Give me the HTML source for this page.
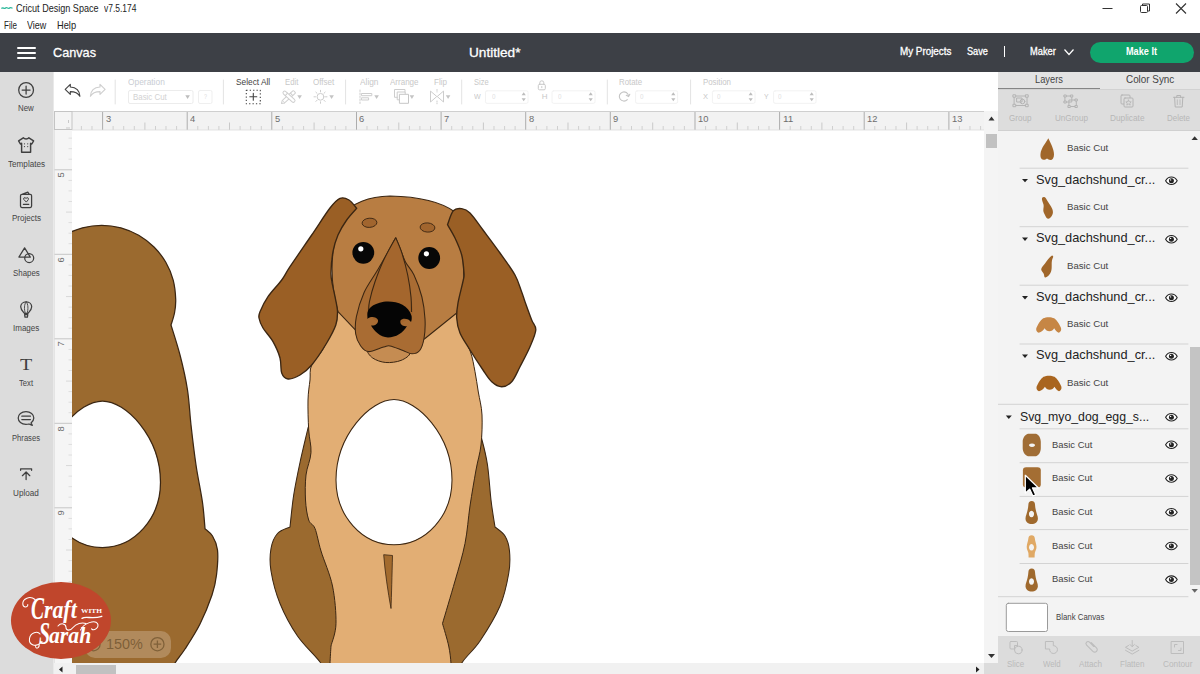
<!DOCTYPE html>
<html><head><meta charset="utf-8"><title>Cricut Design Space</title>
<style>
*{box-sizing:border-box;margin:0;padding:0}
html,body{width:1200px;height:674px;overflow:hidden;background:#fff;font-family:"Liberation Sans",sans-serif;color:#333}
.abs{position:absolute}
.t{position:absolute;white-space:nowrap;line-height:1;transform-origin:0 50%}
</style></head><body>
<div class="abs" style="left:0;top:0;width:1200px;height:33px;background:#fff"></div>
<svg class="abs" style="left:1px;top:4px" width="12" height="8" viewBox="0 0 12 8"><path d="M0.5,4.5 C2,2.5 3,5.5 4.5,4 C6,2.5 7,5.5 8.5,4 C9.5,3 10.5,4.5 11.5,3.8" fill="none" stroke="#2bb89a" stroke-width="1.3"/></svg>
<div class="t" style="left:15.50px;top:3.55px;font-size:10.3px;color:#222;font-weight:normal;;transform:scaleX(0.879)">Cricut Design Space</div>
<div class="t" style="left:103.50px;top:3.55px;font-size:10.3px;color:#222;font-weight:normal;;transform:scaleX(0.822)">v7.5.174</div>
<div class="t" style="left:3.80px;top:20.55px;font-size:10.3px;color:#222;font-weight:normal;;transform:scaleX(0.777)">File</div>
<div class="t" style="left:27.00px;top:20.55px;font-size:10.3px;color:#222;font-weight:normal;;transform:scaleX(0.872)">View</div>
<div class="t" style="left:56.70px;top:20.55px;font-size:10.3px;color:#222;font-weight:normal;;transform:scaleX(0.901)">Help</div>
<svg class="abs" style="left:1095px;top:0" width="105" height="18" viewBox="1095 0 105 18"><path d="M1102.5,8.5h10" stroke="#333" stroke-width="1" fill="none"/><rect x="1140.5" y="5.500" width="7" height="7" rx="1" fill="none" stroke="#333" stroke-width="1"/><path d="M1142.5,5.500v-1.500h7v7h-1.500" fill="none" stroke="#333" stroke-width="1"/><path d="M1176,3.500l10,10M1186,3.500l-10,10" stroke="#333" stroke-width="1.1" fill="none"/></svg>
<div class="abs" style="left:0;top:33px;width:1200px;height:39px;background:#3d4046"></div>
<div class="abs" style="left:17px;top:47px;width:18.5px;height:2px;background:#fff;border-radius:1px;box-shadow:0 5px 0 #fff,0 10px 0 #fff"></div>
<div class="t" style="left:53.30px;top:45.55px;font-size:13.5px;color:#fff;font-weight:normal;-webkit-text-stroke:0.3px #fff;transform:scaleX(0.939)">Canvas</div>
<div class="t" style="left:468.50px;top:45.55px;font-size:13.5px;color:#fff;font-weight:normal;-webkit-text-stroke:0.3px #fff;transform:scaleX(1.009)">Untitled*</div>
<div class="t" style="left:899.80px;top:47.40px;font-size:10px;color:#fff;font-weight:normal;-webkit-text-stroke:0.3px #fff;transform:scaleX(0.984)">My Projects</div>
<div class="t" style="left:966.70px;top:47.40px;font-size:10px;color:#fff;font-weight:normal;-webkit-text-stroke:0.3px #fff;transform:scaleX(0.917)">Save</div>
<div class="abs" style="left:1004px;top:46px;width:1px;height:11px;background:#fff"></div>
<div class="t" style="left:1029.50px;top:47.40px;font-size:10px;color:#fff;font-weight:normal;-webkit-text-stroke:0.3px #fff;transform:scaleX(0.928)">Maker</div>
<svg class="abs" style="left:1063px;top:47px" width="12" height="10" viewBox="0 0 12 10"><path d="M1.500,2.500l4.500,5l4.500,-5" fill="none" stroke="#fff" stroke-width="1.2"/></svg>
<div class="abs" style="left:1090px;top:42.300px;width:104.300px;height:20.900px;border-radius:10.500px;background:#10a56d"></div>
<div class="t" style="left:1126.40px;top:47.40px;font-size:10px;color:#fff;font-weight:bold;;transform:scaleX(0.914)">Make It</div>
<div class="abs" style="left:0;top:72px;width:53px;height:602px;background:#dcdcdc"></div>
<div class="abs" style="left:53px;top:72px;width:1px;height:602px;background:#e9e9e9"></div>
<svg class="abs" style="left:0;top:72px" width="53" height="602" viewBox="0 72 53 602" fill="none" stroke="#3f3f3f" stroke-width="1.25" stroke-linecap="round" stroke-linejoin="round"><circle cx="26.1" cy="90" r="7.4"/><path d="M26.1,86v8M22.100,90h8"/><path stroke-width="1.45" d="M23.300,137.800 C24.500,139.300 27.700,139.300 28.900,137.800 L33.600,140.800 L31.800,144 L30.600,143.300 L30.600,152.200 L21.600,152.200 L21.600,143.300 L20.400,144 L18.600,140.800 Z"/><g fill="#3f3f3f" stroke="none"><circle cx="24.500" cy="143.800" r="0.6"/><circle cx="27.700" cy="143.800" r="0.6"/><circle cx="24.500" cy="146.600" r="0.6"/><circle cx="27.700" cy="146.600" r="0.6"/></g><path d="M22,194.300 L27.800,192.100 L29.300,194.300 L30.200,194.300 Q31.600,194.300 31.600,195.700 L31.600,206.100 Q31.600,207.500 30.200,207.500 L21.900,207.500 Q20.500,207.500 20.500,206.100 L20.500,195.700 Q20.500,194.300 22,194.300 L29.300,194.300"/><path d="M26.050,201.800 L23.700,199.300 Q23.300,197.600 24.900,197.600 Q25.800,197.700 26.050,198.500 Q26.300,197.700 27.200,197.600 Q28.800,197.600 28.400,199.300 Z" stroke-width="1"/><path d="M23.400,204.300h5.400"/><path d="M24.600,247.800 L30.300,257.100 L18.900,257.100 Z"/><circle cx="29.200" cy="258" r="4.500"/><path d="M26.200,301.800 C29.600,301.800 31.700,304.200 31.700,306.800 C31.700,309.600 29.700,311.300 28,313.300 L24.400,313.300 C22.700,311.300 20.700,309.600 20.700,306.800 C20.700,304.200 22.800,301.800 26.200,301.800 Z"/><path d="M26.200,301.800 C24,304 24,309.500 25.300,313.300 M26.200,301.800 C28.400,304 28.400,309.500 27.100,313.300" stroke-width="0.9"/><path d="M24.600,314.600 h3.200 l-0.4,2.500 h-2.400 Z"/><path d="M26,411.600 C30.500,411.600 33.800,414.400 33.800,418 C33.800,420 32.700,421.700 31,422.900 L32.300,425.400 L29,424 C28,424.300 27,424.400 26,424.400 C21.500,424.400 18.200,421.600 18.200,418 C18.200,414.400 21.500,411.600 26,411.600 Z"/><path d="M21.800,416.200h8.600M21.800,419.600h8.600"/><path d="M20.600,470.300 v-1.500 h11 v1.500 M26.100,479.600 v-7.400 M22.400,475.700 l3.700,-3.700 l3.700,3.700"/></svg><div class="t" style="left:18.20px;top:104.25px;font-size:8.5px;color:#444;font-weight:normal;;transform:scaleX(0.929)">New</div><div class="t" style="left:7.90px;top:159.55px;font-size:8.5px;color:#444;font-weight:normal;;transform:scaleX(0.957)">Templates</div><div class="t" style="left:11.70px;top:214.15px;font-size:8.5px;color:#444;font-weight:normal;;transform:scaleX(0.947)">Projects</div><div class="t" style="left:12.90px;top:269.15px;font-size:8.5px;color:#444;font-weight:normal;;transform:scaleX(0.926)">Shapes</div><div class="t" style="left:12.90px;top:323.75px;font-size:8.5px;color:#444;font-weight:normal;;transform:scaleX(0.943)">Images</div><div class="t" style="left:20px;top:356px;font-family:'Liberation Serif',serif;font-size:17.500px;color:#3f3f3f;transform:scaleX(1.14)">T</div><div class="t" style="left:19.20px;top:379.15px;font-size:8.5px;color:#444;font-weight:normal;;transform:scaleX(0.904)">Text</div><div class="t" style="left:12.00px;top:433.55px;font-size:8.5px;color:#444;font-weight:normal;;transform:scaleX(0.898)">Phrases</div><div class="t" style="left:13.20px;top:488.55px;font-size:8.5px;color:#444;font-weight:normal;;transform:scaleX(0.958)">Upload</div>
<div class="abs" style="left:54px;top:72px;width:944px;height:39px;background:#fff"></div>
<svg class="abs" style="left:54px;top:72px" width="944" height="39" viewBox="54 72 944 39" fill="none" stroke-linecap="round" stroke-linejoin="round"><path d="M70.300,84.300 L65.200,89.300 L70.300,94.300 L70.300,91.600 C75,91.600 78,93 79.900,96.300 C79.600,90.600 76,87.300 70.300,87 Z" stroke="#444" stroke-width="1.15"/><g transform="translate(170.300,0) scale(-1,1)"><path d="M70.300,84.300 L65.200,89.300 L70.300,94.300 L70.300,91.600 C75,91.600 78,93 79.900,96.300 C79.600,90.600 76,87.300 70.300,87 Z" stroke="#cfcfcf" stroke-width="1.15"/></g><path d="M115.2,80V104" stroke="#e3e3e3" stroke-width="1"/><path d="M223.4,80V104" stroke="#e3e3e3" stroke-width="1"/><path d="M345.6,80V104" stroke="#e3e3e3" stroke-width="1"/><path d="M461.7,80V104" stroke="#e3e3e3" stroke-width="1"/><path d="M607.3,80V104" stroke="#e3e3e3" stroke-width="1"/><path d="M690.6,80V104" stroke="#e3e3e3" stroke-width="1"/><rect x="128.500" y="90.500" width="64.500" height="13" rx="1.500" stroke="#ececec"/><path d="M185.300,95.300h4.600l-2.300,3.600z" fill="#bdbdbd"/><rect x="198.500" y="90.500" width="13.500" height="13" rx="1.500" stroke="#efefef"/><rect x="246.300" y="90.300" width="14" height="13.500" stroke="#444" stroke-width="1.1" stroke-dasharray="1.300 2.100" stroke-linecap="butt"/><path d="M253.300,93.300v7M249.800,96.800h7" stroke="#444" stroke-width="1.1"/><g stroke="#cfcfcf" stroke-width="1" fill="#fff"><g transform="rotate(-42 289 96.700)"><rect x="281.500" y="95" width="15" height="3.400" rx="0.800"/><path d="M281.500,95l-2.600,1.700l2.600,1.700M292.500,95v3.400"/></g><g transform="rotate(42 289 96.700)"><rect x="281.500" y="95" width="15" height="3.400" rx="1.700"/><path d="M285.500,95v3.400"/></g></g><path d="M297.300,95.300h4.600l-2.300,3.600z" fill="#c4c4c4"/><g stroke="#cdcdcd" stroke-width="1"><circle cx="320.500" cy="96.800" r="3.400"/><path d="M320.500,90.300v1.500M320.500,101.800v1.500M314,96.800h1.500M325.500,96.800h1.500M315.900,92.200l1.100,1.100M324,100.300l1.100,1.100M315.900,101.400l1.100,-1.100M324,93.300l1.100,-1.100" stroke-dasharray="none"/></g><path d="M329.300,95.300h4.600l-2.300,3.600z" fill="#c4c4c4"/><g stroke="#cdcdcd" stroke-width="1"><path d="M360,90v13.500" stroke-dasharray="1.500 1.500"/><rect x="361.800" y="93.500" width="10" height="2.200"/><rect x="361.800" y="97.800" width="6.800" height="2.200"/></g><path d="M374.300,95.300h4.600l-2.300,3.600z" fill="#c4c4c4"/><g stroke="#cdcdcd" stroke-width="1"><path d="M397.300,97.300h-2.800v-7.800h10.500v2.500"/><path d="M399.800,99.800h-2.600v-7.800h8v2"/><rect x="399.800" y="94.300" width="8.700" height="9" fill="#fff" stroke="#c6c6c6"/></g><path d="M409.600,95.300h4.600l-2.300,3.600z" fill="#c4c4c4"/><g stroke="#cdcdcd" stroke-width="1"><path d="M430.500,91.500v10.500l6,-5.250z"/><path d="M443.500,91.500v10.500l-6,-5.250z"/><path d="M437,89.500v2.500M437,101v2.800" stroke-dasharray="1 1.200"/></g><path d="M445.800,95.300h4.600l-2.300,3.600z" fill="#c4c4c4"/><rect x="485.5" y="90.800" width="42.5" height="12.500" rx="1.500" stroke="#f2f2f2"/><path d="M521.6,95.300l2.100,-3l2.100,3z M521.6,98.300l2.100,3l2.100,-3z" fill="#bdbdbd"/><rect x="552" y="90.800" width="43" height="12.500" rx="1.500" stroke="#f2f2f2"/><path d="M588.6,95.300l2.100,-3l2.100,3z M588.6,98.300l2.100,3l2.100,-3z" fill="#bdbdbd"/><rect x="635.6" y="90.800" width="42.0" height="12.500" rx="1.500" stroke="#f2f2f2"/><path d="M671.2,95.300l2.100,-3l2.100,3z M671.2,98.300l2.100,3l2.100,-3z" fill="#bdbdbd"/><rect x="712.4" y="90.800" width="42.60000000000002" height="12.500" rx="1.500" stroke="#f2f2f2"/><path d="M748.6,95.300l2.100,-3l2.100,3z M748.6,98.300l2.100,3l2.100,-3z" fill="#bdbdbd"/><rect x="773.6" y="90.800" width="42.39999999999998" height="12.500" rx="1.500" stroke="#f2f2f2"/><path d="M809.6,95.300l2.100,-3l2.100,3z M809.6,98.300l2.100,3l2.100,-3z" fill="#bdbdbd"/><g stroke="#c9c9c9" stroke-width="1"><rect x="538.300" y="84.300" width="7" height="5.500" rx="1.200"/><path d="M539.800,84.300v-1.500a2,2 0 0 1 4,0v1.500"/><path d="M541.800,86.500v1.200"/></g><g stroke="#c4c4c4" stroke-width="1.1"><path d="M627.300,99.600a4.600,4.600 0 1 1 1.200,-3.600"/><path d="M626.300,95.300l2.300,1.300l1.200,-2.400"/></g></svg><div class="t" style="left:128.00px;top:78.10px;font-size:9px;color:#c9cdd3;font-weight:normal;;transform:scaleX(0.931)">Operation</div><div class="t" style="left:133.00px;top:92.50px;font-size:9px;color:#d2d2d2;font-weight:normal;;transform:scaleX(0.878)">Basic Cut</div><div class="t" style="left:203.60px;top:93.25px;font-size:7.5px;color:#dcdcdc;font-weight:normal;;transform:scaleX(0.719)">?</div><div class="t" style="left:236.00px;top:77.90px;font-size:9px;color:#444;font-weight:normal;;transform:scaleX(0.924)">Select All</div><div class="t" style="left:284.80px;top:77.90px;font-size:9px;color:#c8c8c8;font-weight:normal;;transform:scaleX(0.864)">Edit</div><div class="t" style="left:313.20px;top:77.90px;font-size:9px;color:#c8c8c8;font-weight:normal;;transform:scaleX(0.893)">Offset</div><div class="t" style="left:359.50px;top:77.90px;font-size:9px;color:#c8c8c8;font-weight:normal;;transform:scaleX(0.924)">Align</div><div class="t" style="left:390.00px;top:77.90px;font-size:9px;color:#c8c8c8;font-weight:normal;;transform:scaleX(0.890)">Arrange</div><div class="t" style="left:433.50px;top:77.90px;font-size:9px;color:#c8c8c8;font-weight:normal;;transform:scaleX(0.896)">Flip</div><div class="t" style="left:473.70px;top:77.90px;font-size:9px;color:#c8c8c8;font-weight:normal;;transform:scaleX(0.834)">Size</div><div class="t" style="left:474.30px;top:92.90px;font-size:8px;color:#c8c8c8;font-weight:normal;;transform:scaleX(0.886)">W</div><div class="t" style="left:491.50px;top:92.90px;font-size:8px;color:#e2e2e2;font-weight:normal;;transform:scaleX(0.786)">0</div><div class="t" style="left:541.70px;top:92.90px;font-size:8px;color:#c8c8c8;font-weight:normal;">H</div><div class="t" style="left:557.50px;top:92.90px;font-size:8px;color:#e2e2e2;font-weight:normal;;transform:scaleX(0.786)">0</div><div class="t" style="left:619.40px;top:77.90px;font-size:9px;color:#c8c8c8;font-weight:normal;;transform:scaleX(0.874)">Rotate</div><div class="t" style="left:640.00px;top:92.90px;font-size:8px;color:#e2e2e2;font-weight:normal;;transform:scaleX(0.786)">0</div><div class="t" style="left:703.00px;top:77.90px;font-size:9px;color:#c8c8c8;font-weight:normal;;transform:scaleX(0.874)">Position</div><div class="t" style="left:702.60px;top:92.90px;font-size:8px;color:#c8c8c8;font-weight:normal;;transform:scaleX(0.936)">X</div><div class="t" style="left:716.50px;top:92.90px;font-size:8px;color:#e2e2e2;font-weight:normal;;transform:scaleX(0.786)">0</div><div class="t" style="left:764.00px;top:92.90px;font-size:8px;color:#c8c8c8;font-weight:normal;;transform:scaleX(0.861)">Y</div><div class="t" style="left:778.00px;top:92.90px;font-size:8px;color:#e2e2e2;font-weight:normal;;transform:scaleX(0.786)">0</div>
<div class="abs" style="left:54px;top:111px;width:930px;height:19px;background:#f2f2f2;border-top:1px solid #cfcfcf"></div><div class="abs" style="left:54px;top:130px;width:18px;height:533px;background:#f5f5f5;border-left:1px solid #e4e4e4"></div><svg class="abs" style="left:54px;top:111px" width="930" height="552" viewBox="54 111 930 552" fill="none"><path d="M81.4,126V130M92.0,126V130M113.1,126V130M123.7,126V130M134.3,126V130M155.5,126V130M166.0,126V130M176.6,126V130M197.8,126V130M208.4,126V130M218.9,126V130M240.1,126V130M250.7,126V130M261.3,126V130M282.4,126V130M293.0,126V130M303.6,126V130M324.7,126V130M335.3,126V130M345.9,126V130M367.0,126V130M377.6,126V130M388.2,126V130M409.4,126V130M419.9,126V130M430.5,126V130M451.7,126V130M462.2,126V130M472.8,126V130M494.0,126V130M504.6,126V130M515.1,126V130M536.3,126V130M546.9,126V130M557.5,126V130M578.6,126V130M589.2,126V130M599.8,126V130M620.9,126V130M631.5,126V130M642.1,126V130M663.2,126V130M673.8,126V130M684.4,126V130M705.6,126V130M716.1,126V130M726.7,126V130M747.9,126V130M758.5,126V130M769.0,126V130M790.2,126V130M800.8,126V130M811.3,126V130M832.5,126V130M843.1,126V130M853.7,126V130M874.8,126V130M885.4,126V130M896.0,126V130M917.1,126V130M927.7,126V130M938.3,126V130M959.4,126V130M970.0,126V130M980.6,126V130" stroke="#cfcfcf" stroke-width="1"/><path d="M144.9,122.500V130M229.5,122.500V130M314.1,122.500V130M398.8,122.500V130M483.4,122.500V130M568.0,122.500V130M652.7,122.500V130M737.3,122.500V130M821.9,122.500V130M906.6,122.500V130" stroke="#c9c9c9" stroke-width="1"/><path d="M102.6,112V130M187.2,112V130M271.8,112V130M356.5,112V130M441.1,112V130M525.7,112V130M610.3,112V130M695.0,112V130M779.6,112V130M864.2,112V130M948.9,112V130" stroke="#adadad" stroke-width="1"/><path d="M68.500,138.1H72M68.500,148.7H72M68.500,159.2H72M68.500,180.4H72M68.500,190.9H72M68.500,201.5H72M68.500,222.6H72M68.500,233.2H72M68.500,243.7H72M68.500,264.9H72M68.500,275.4H72M68.500,286.0H72M68.500,307.1H72M68.500,317.7H72M68.500,328.2H72M68.500,349.4H72M68.500,359.9H72M68.500,370.5H72M68.500,391.6H72M68.500,402.2H72M68.500,412.7H72M68.500,433.9H72M68.500,444.4H72M68.500,455.0H72M68.500,476.1H72M68.500,486.7H72M68.500,497.2H72M68.500,518.4H72M68.500,528.9H72M68.500,539.5H72M68.500,560.6H72M68.500,571.2H72M68.500,581.7H72M68.500,602.9H72M68.500,613.4H72M68.500,624.0H72M68.500,645.1H72M68.500,655.7H72" stroke="#dedede" stroke-width="1"/><path d="M66,212.1H72M66,296.6H72M66,381.1H72M66,465.6H72M66,550.0H72M66,634.5H72" stroke="#d8d8d8" stroke-width="1"/><path d="M54.500,169.8H72M54.500,254.3H72M54.500,338.8H72M54.500,423.3H72M54.500,507.8H72M54.500,592.3H72" stroke="#c6c6c6" stroke-width="1"/><rect x="54.500" y="111.500" width="17.500" height="18" fill="#f4f4f4" stroke="#c4c4c4"/><path d="M68.500,120v3M66,128h4" stroke="#c9c9c9"/><path d="M72,130H984" stroke="#dcdcdc" stroke-width="0.8"/></svg><div class="t" style="left:105.57px;top:113.55px;font-size:9.5px;color:#6e6e6e;font-weight:normal;;transform:scaleX(0.982)">3</div><div class="t" style="left:190.20px;top:113.55px;font-size:9.5px;color:#6e6e6e;font-weight:normal;;transform:scaleX(0.982)">4</div><div class="t" style="left:274.83px;top:113.55px;font-size:9.5px;color:#6e6e6e;font-weight:normal;;transform:scaleX(0.982)">5</div><div class="t" style="left:359.46px;top:113.55px;font-size:9.5px;color:#6e6e6e;font-weight:normal;;transform:scaleX(0.982)">6</div><div class="t" style="left:444.09px;top:113.55px;font-size:9.5px;color:#6e6e6e;font-weight:normal;;transform:scaleX(0.982)">7</div><div class="t" style="left:528.72px;top:113.55px;font-size:9.5px;color:#6e6e6e;font-weight:normal;;transform:scaleX(0.982)">8</div><div class="t" style="left:613.35px;top:113.55px;font-size:9.5px;color:#6e6e6e;font-weight:normal;;transform:scaleX(0.982)">9</div><div class="t" style="left:697.98px;top:113.55px;font-size:9.5px;color:#6e6e6e;font-weight:normal;;transform:scaleX(0.983)">10</div><div class="t" style="left:782.61px;top:113.55px;font-size:9.5px;color:#6e6e6e;font-weight:normal;;transform:scaleX(1.053)">11</div><div class="t" style="left:867.24px;top:113.55px;font-size:9.5px;color:#6e6e6e;font-weight:normal;;transform:scaleX(0.983)">12</div><div class="t" style="left:951.87px;top:113.55px;font-size:9.5px;color:#6e6e6e;font-weight:normal;;transform:scaleX(0.983)">13</div><div class="t" style="left:56.500px;top:172.3px;width:7px;height:7px;font-size:9.300px;color:#6e6e6e"><div style="position:absolute;left:0;top:0;transform-origin:0 0;transform:translate(0,5.500px) rotate(-90deg)">5</div></div><div class="t" style="left:56.500px;top:256.8px;width:7px;height:7px;font-size:9.300px;color:#6e6e6e"><div style="position:absolute;left:0;top:0;transform-origin:0 0;transform:translate(0,5.500px) rotate(-90deg)">6</div></div><div class="t" style="left:56.500px;top:341.3px;width:7px;height:7px;font-size:9.300px;color:#6e6e6e"><div style="position:absolute;left:0;top:0;transform-origin:0 0;transform:translate(0,5.500px) rotate(-90deg)">7</div></div><div class="t" style="left:56.500px;top:425.8px;width:7px;height:7px;font-size:9.300px;color:#6e6e6e"><div style="position:absolute;left:0;top:0;transform-origin:0 0;transform:translate(0,5.500px) rotate(-90deg)">8</div></div><div class="t" style="left:56.500px;top:510.3px;width:7px;height:7px;font-size:9.300px;color:#6e6e6e"><div style="position:absolute;left:0;top:0;transform-origin:0 0;transform:translate(0,5.500px) rotate(-90deg)">9</div></div><div class="t" style="left:56.500px;top:594.8px;width:7px;height:7px;font-size:9.300px;color:#6e6e6e"><div style="position:absolute;left:0;top:0;transform-origin:0 0;transform:translate(0,5.500px) rotate(-90deg)">10</div></div>
<div class="abs" style="left:72px;top:131px;width:912px;height:532px;background:#fff;overflow:hidden"><div class="abs" style="left:0;top:1px;width:912px;height:531px"><svg class="abs" style="left:0;top:0" width="912" height="531" viewBox="72 132 912 531">
<path d="M30.0,340.0C31.3,339.4 37.6,339.9 37.6,336.3C37.7,332.7 31.9,324.6 30.2,318.5C28.6,312.3 27.7,305.7 27.7,299.3C27.7,292.9 28.6,286.3 30.2,280.1C31.9,274.0 34.4,267.8 37.6,262.3C40.8,256.8 44.9,251.5 49.4,247.0C53.9,242.5 59.2,238.4 64.7,235.2C70.2,232.0 76.4,229.5 82.5,227.8C88.7,226.2 95.3,225.3 101.7,225.3C108.1,225.3 114.7,226.2 120.9,227.8C127.0,229.5 133.2,232.0 138.7,235.2C144.2,238.4 149.5,242.5 154.0,247.0C158.5,251.5 162.6,256.8 165.8,262.3C169.0,267.8 171.5,274.0 173.2,280.1C174.8,286.3 175.5,293.8 175.7,299.3C175.9,304.8 175.3,308.7 174.5,313.0C173.7,317.3 171.6,323.0 171.0,325.0C172.5,330.0 177.2,344.2 180.0,355.0C182.8,365.8 185.7,378.3 187.5,390.0C189.3,401.7 189.6,412.5 191.0,425.0C192.4,437.5 194.1,452.1 196.0,465.0C197.9,477.9 201.0,491.9 202.5,502.5C204.0,513.1 204.6,524.3 205.0,528.7C206.2,529.9 210.4,532.5 212.5,536.0C214.6,539.5 216.8,543.5 217.5,550.0C218.2,556.5 217.4,567.5 216.5,575.0C215.6,582.5 214.8,586.8 212.0,595.0C209.2,603.2 204.5,615.0 200.0,624.0C195.5,633.0 189.2,642.5 185.0,649.0C180.8,655.5 178.3,657.8 175.0,663.0C171.7,668.2 166.7,677.2 165.0,680.0C142.5,680.0 52.5,680.0 30.0,680.0C30.0,623.3 30.0,396.7 30.0,340.0Z M102.5,401.0 C125.7,401.0 160.5,436.8 160.5,482.3 C160.5,518.3 134.5,547.5 102.5,547.5 C70.5,547.5 44.5,518.3 44.5,482.3 C44.5,436.8 79.3,401.0 102.5,401.0 Z" fill="#9b6a2f" stroke="#3b2612" stroke-width="1.25" stroke-linejoin="round" fill-rule="evenodd"/>
<path d="M308.0,428.0C306.7,433.8 302.4,451.3 300.0,462.5C297.6,473.7 295.4,484.2 293.7,495.0C292.0,505.8 290.6,521.7 290.0,527.0C287.9,528.1 280.7,529.9 277.5,533.5C274.3,537.1 272.1,542.2 271.0,548.5C269.9,554.8 269.5,561.8 271.0,571.0C272.5,580.2 275.6,592.7 280.0,603.5C284.4,614.3 290.8,626.2 297.5,636.0C304.2,645.8 314.6,654.7 320.0,662.0C325.4,669.3 328.3,677.0 330.0,680.0C350.8,680.0 434.2,680.0 455.0,680.0C456.2,677.0 458.3,668.5 462.5,662.0C466.7,655.5 473.8,650.3 480.0,641.0C486.2,631.7 495.2,617.2 500.0,606.0C504.8,594.8 507.1,582.7 508.7,573.5C510.3,564.3 510.1,557.2 509.5,551.0C508.9,544.8 507.4,540.0 505.0,536.0C502.6,532.0 496.7,528.5 495.0,527.0C494.3,522.5 492.2,510.3 491.0,500.0C489.8,489.7 489.0,475.0 487.5,465.0C486.0,455.0 484.9,450.8 482.0,440.0C479.1,429.2 472.0,406.7 470.0,400.0C445.0,400.0 345.0,400.0 320.0,400.0C318.0,404.7 310.0,423.3 308.0,428.0Z" fill="#9b6a2f" stroke="#3b2612" stroke-width="1.05" stroke-linejoin="round" />
<path d="M311.7,365.0C309.2,370.8 310.6,374.2 310.0,380.0C309.4,385.8 308.2,391.7 308.0,400.0C307.8,408.3 308.2,421.2 308.7,430.0C309.2,438.8 311.4,445.0 311.0,452.5C310.6,460.0 306.9,467.1 306.0,475.0C305.1,482.9 305.1,492.5 305.5,500.0C305.9,507.5 307.1,515.2 308.7,520.0C310.3,524.8 312.9,523.3 315.0,528.5C317.1,533.7 318.1,541.4 321.0,551.0C323.9,560.6 330.0,573.9 332.5,586.0C335.0,598.1 336.2,613.5 336.0,623.5C335.8,633.5 331.8,642.2 331.0,646.0C330.8,648.9 330.2,657.8 330.0,663.5C329.8,669.2 330.0,677.2 330.0,680.0C350.2,680.0 430.8,680.0 451.0,680.0C451.0,677.2 451.4,669.2 451.0,663.5C450.6,657.8 450.1,652.7 448.7,646.0C447.3,639.3 443.5,627.2 442.5,623.5C444.6,616.4 451.2,594.3 455.0,581.0C458.8,567.7 462.5,556.0 465.0,543.5C467.5,531.0 468.2,518.2 470.0,506.0C471.8,493.8 474.2,480.2 476.0,470.0C477.8,459.8 480.0,454.2 481.0,445.0C482.0,435.8 482.4,423.8 482.0,415.0C481.6,406.2 479.5,399.2 478.3,392.0C477.1,384.8 476.3,378.4 475.0,371.7C473.7,365.0 472.7,358.1 470.5,352.0C468.3,345.9 463.4,337.8 462.0,335.0C461.3,330.0 458.7,310.0 458.0,305.0C437.7,305.0 358.2,298.3 336.0,305.0C313.8,311.7 329.1,335.0 325.0,345.0C320.9,355.0 314.2,359.2 311.7,365.0Z" fill="#e2ae74" stroke="#3b2612" stroke-width="1.0" stroke-linejoin="round" />
<path d="M394.0,399.5 C417.2,399.5 452.0,435.0 452.0,480.1 C452.0,515.8 426.0,544.7 394.0,544.7 C362.0,544.7 336.0,515.8 336.0,480.1 C336.0,435.0 370.8,399.5 394.0,399.5 Z" fill="#fff" stroke="#3b2612" stroke-width="1.05" stroke-linejoin="round" />
<path d="M383.7,554.7 L392.5,555.5 C392,575 391.5,595 391,608.5 C388,592 385,572 383.7,554.7Z" fill="#a36b2e" stroke="#3b2612" stroke-width="0.8" stroke-linejoin="round" />
<path d="M345,215 C350,203 370,196.5 390,196 C415,196.5 440,201 455,212 C462,240 465,270 463,292 L456.7,313 L425,338.5 L416,344 L366,344 L355.3,329.8 L338,311.7 C332,290 331,270 333,252 C335,235 340,222 345,215 Z" fill="#b87d42" stroke="#3b2612" stroke-width="1.05" stroke-linejoin="round" />
<path d="M367.3,349.0C366.1,351.2 369.6,355.8 372.7,358.0C375.8,360.2 381.1,362.1 385.8,362.5C390.5,362.9 397.0,362.0 401.0,360.4C405.0,358.8 410.1,355.6 409.9,353.0C409.7,350.4 405.0,346.3 400.0,345.0C395.0,343.7 385.4,344.3 380.0,345.0C374.6,345.7 368.5,346.8 367.3,349.0Z" fill="#c58c52" stroke="#3b2612" stroke-width="1.0" stroke-linejoin="round" />
<ellipse cx="369.5" cy="222.8" rx="7.4" ry="4.6" transform="rotate(-4 369.5 222.8)" fill="#a1652e" stroke="#3b2612" stroke-width="0.9"/>
<ellipse cx="427.5" cy="227.5" rx="7.4" ry="4.6" transform="rotate(4 427.5 227.5)" fill="#a1652e" stroke="#3b2612" stroke-width="0.9"/>
<path d="M395.7,237.7C394.4,240.1 391.1,246.4 388.0,252.0C384.9,257.6 381.0,264.2 377.0,271.0C373.0,277.8 367.4,285.1 364.0,292.7C360.6,300.3 357.8,309.8 356.4,316.7C355.0,323.6 355.0,329.1 355.7,334.0C356.4,338.9 358.6,343.1 360.7,346.0C362.8,348.9 364.6,351.4 368.4,351.6C372.2,351.8 380.1,347.9 383.7,347.0C387.3,346.1 386.8,345.4 390.0,346.0C393.2,346.6 399.3,349.2 403.0,350.5C406.7,351.8 409.2,353.8 412.0,353.8C414.8,353.8 417.7,353.1 419.7,350.5C421.7,347.9 423.1,343.8 424.0,338.5C424.9,333.2 425.4,325.9 425.0,319.0C424.6,312.1 423.7,304.3 421.9,297.0C420.1,289.7 416.7,280.8 414.0,275.0C411.3,269.2 407.8,266.5 405.5,262.0C403.2,257.5 401.6,252.1 400.0,248.0C398.4,243.9 396.4,239.4 395.7,237.7Z" fill="#a96c33" stroke="#3b2612" stroke-width="1.05" stroke-linejoin="round" />
<path d="M395.7,237.7C393.7,241.4 387.1,252.7 383.7,260.0C380.2,267.4 377.4,274.9 375.0,281.8C372.6,288.7 370.7,295.9 369.5,301.4C368.3,306.9 364.6,311.1 368.0,315.0C371.4,318.9 382.8,324.8 390.0,325.0C397.2,325.2 408.0,320.7 411.5,316.0C415.0,311.3 411.6,303.8 411.0,297.0C410.4,290.2 409.2,282.3 407.7,275.0C406.2,267.7 404.0,259.6 402.0,253.4C400.0,247.2 396.8,240.3 395.7,237.7Z" fill="#a4662d"/>
<path d="M395.7,237.7C393.7,241.4 387.1,252.7 383.7,260.0C380.2,267.4 377.4,274.9 375.0,281.8C372.6,288.7 370.6,296.4 369.5,301.4C368.4,306.4 368.7,310.2 368.5,312.0" fill="none" stroke="#3b2612" stroke-width="1.1"/>
<path d="M395.7,237.7C396.8,240.3 400.0,247.2 402.0,253.4C404.0,259.6 406.2,267.7 407.7,275.0C409.2,282.3 410.4,290.8 411.0,297.0C411.6,303.2 411.4,309.5 411.5,312.0" fill="none" stroke="#3b2612" stroke-width="1.1"/>
<path d="M367.3,315 C367,309 372,304 383.7,301.8 C395,300.5 408,304 411.6,316 C412,319 411.5,321 411,322 C409,318.5 402.5,317.5 400.5,320.5 C399.5,324 403,327 407,326 C403,333 396,337.4 388,337.4 C380,337 374,331 371,325.5 C375,326 378.5,323.5 378,320 C376.5,316.5 370,316 367.5,319 Z" fill="#050505"/>
<circle cx="363.3" cy="252.8" r="10.9" fill="#070707"/>
<circle cx="360.8" cy="248.8" r="2.6" fill="#fff"/>
<circle cx="429.2" cy="258" r="10.9" fill="#070707"/>
<circle cx="426.4" cy="253.8" r="2.6" fill="#fff"/>
<path d="M340.0,198.3C343.2,197.0 346.2,198.3 349.0,200.0C351.8,201.7 355.4,206.9 356.7,208.3C355.0,210.2 349.8,215.6 346.7,220.0C343.6,224.4 340.3,229.7 338.0,235.0C335.7,240.3 334.2,245.4 333.0,251.7C331.8,258.0 331.1,267.4 331.0,273.0C330.9,278.6 331.8,281.1 332.5,285.0C333.2,288.9 334.2,292.2 335.0,296.7C335.8,301.1 337.4,307.0 337.5,311.7C337.6,316.4 337.6,319.8 335.8,325.0C334.0,330.2 330.7,336.3 326.7,343.0C322.7,349.7 316.1,359.7 311.7,365.0C307.2,370.3 303.9,372.7 300.0,375.0C296.1,377.3 291.1,379.3 288.0,379.0C284.9,378.7 283.0,376.5 281.7,373.0C280.4,369.5 281.4,363.2 280.0,358.0C278.6,352.8 275.8,346.7 273.0,341.7C270.2,336.7 265.3,331.9 263.0,328.0C260.7,324.1 259.5,320.7 259.0,318.0C258.5,315.3 258.5,315.2 260.0,311.7C261.5,308.1 264.4,302.0 268.0,296.7C271.6,291.4 278.0,285.0 281.7,280.0C285.4,275.0 285.0,274.2 290.0,266.7C295.0,259.2 305.0,244.8 311.7,235.0C318.4,225.2 325.3,214.1 330.0,208.0C334.7,201.9 336.8,199.6 340.0,198.3Z" fill="#9a5f25" stroke="#3b2612" stroke-width="1.35" stroke-linejoin="round" />
<path d="M453.3,210.8C455.7,208.1 458.9,208.3 461.7,208.7C464.5,209.1 466.4,209.4 470.0,213.0C473.6,216.6 478.0,223.3 483.0,230.0C488.0,236.7 494.7,245.5 500.0,253.0C505.3,260.5 511.4,268.5 515.0,275.0C518.6,281.5 520.0,287.6 521.7,292.0C523.4,296.4 523.3,297.0 525.0,301.7C526.7,306.4 529.9,315.3 531.7,320.0C533.5,324.7 536.1,325.6 535.8,330.0C535.5,334.4 532.6,340.6 530.0,346.7C527.4,352.8 523.0,360.9 520.0,366.7C517.0,372.5 514.8,378.4 511.7,381.7C508.6,385.0 505.0,386.7 501.7,386.7C498.4,386.7 494.8,384.5 491.7,381.7C488.6,378.9 486.6,375.3 483.0,370.0C479.4,364.7 473.8,356.2 470.0,350.0C466.2,343.8 462.2,338.3 460.0,333.0C457.8,327.7 457.0,323.0 456.7,318.0C456.4,313.0 456.9,309.3 458.0,303.0C459.1,296.7 462.3,285.0 463.3,280.0C464.3,275.0 464.3,277.2 464.0,273.0C463.7,268.8 463.2,260.8 461.7,255.0C460.2,249.2 457.4,243.1 455.0,238.0C452.6,232.9 448.8,226.9 447.5,224.7C448.5,222.4 450.9,213.5 453.3,210.8Z" fill="#9a5f25" stroke="#3b2612" stroke-width="1.35" stroke-linejoin="round" />
</svg></div></div>
<div class="abs" style="left:85px;top:630.500px;width:86px;height:27px;border-radius:10px;background:rgba(255,255,255,0.22)"></div><svg class="abs" style="left:85px;top:630px" width="86" height="28" viewBox="85 630 86 28" fill="none" stroke="rgba(60,40,10,0.42)" stroke-width="1.300"><circle cx="157.400" cy="644.200" r="6.600"/><path d="M157.400,640.400v7.600M153.600,644.200h7.600"/><circle cx="93.500" cy="644.200" r="6.600"/></svg><div class="t" style="left:106.40px;top:637.30px;font-size:14px;color:rgba(60,40,10,0.46);font-weight:normal;;transform:scaleX(1.028)">150%</div>
<div class="abs" style="left:984px;top:111px;width:14px;height:552px;background:#f4f4f4"></div>
<div class="abs" style="left:986px;top:134px;width:10.500px;height:13.500px;background:#c1c1c1"></div>
<svg class="abs" style="left:984px;top:111px" width="14" height="552" viewBox="0 0 14 552"><path d="M4.500,9.500l3,-4l3,4z" fill="#333"/><path d="M4,543l3.500,4l3.500,-4z" fill="#333"/></svg>
<div class="abs" style="left:54px;top:663px;width:944px;height:11px;background:#f1f1f1"></div>
<div class="abs" style="left:76px;top:665px;width:39.500px;height:9px;background:#c1c1c1"></div>
<div class="abs" style="left:984px;top:663px;width:14px;height:11px;background:#dcdcdc"></div>
<svg class="abs" style="left:54px;top:663px" width="930" height="11" viewBox="0 0 930 11"><path d="M8.500,3.500l-3.500,3l3.500,3z" fill="#222"/><path d="M922,3.500l3.500,3l-3.500,3z" fill="#222"/></svg>
<div class="abs" style="left:998px;top:72px;width:202px;height:602px;background:#f3f3f3"></div><div class="abs" style="left:998px;top:72px;width:202px;height:17px;background:#e3e3e3"></div><div class="abs" style="left:1100px;top:72px;width:100px;height:17px;background:#e6e6e6"></div><div class="abs" style="left:998px;top:88.500px;width:202px;height:1px;background:#d2d2d2"></div><div class="abs" style="left:998px;top:88.400px;width:102px;height:1.100px;background:#858585"></div><div class="abs" style="left:998px;top:90px;width:202px;height:39.500px;background:#dddddd"></div><div class="abs" style="left:998px;top:129.500px;width:202px;height:1px;background:#d0d0d0"></div><div class="abs" style="left:998px;top:636px;width:202px;height:38px;background:#dcdcdc"></div><div class="abs" style="left:1189.500px;top:347px;width:10.500px;height:238px;background:#c4c4c4"></div><svg class="abs" style="left:998px;top:72px" width="202" height="602" viewBox="998 72 202 602" fill="none" stroke-linecap="round" stroke-linejoin="round"><path d="M1191.500,140l3.200,-3.800l3.200,3.800z" fill="#333"/><path d="M1191.500,589l3.200,3.800l3.200,-3.800z" fill="#666"/><g stroke="#b4b4b4" stroke-width="1"><rect x="1014.500" y="96" width="12.500" height="9.500"/><rect x="1013.300" y="94.800" width="2.400" height="2.400" fill="#ddd"/><rect x="1025.800" y="94.800" width="2.400" height="2.400" fill="#ddd"/><rect x="1013.300" y="104.300" width="2.400" height="2.400" fill="#ddd"/><rect x="1025.800" y="104.300" width="2.400" height="2.400" fill="#ddd"/><rect x="1017" y="98" width="5" height="4"/><circle cx="1022.500" cy="101.500" r="2.300"/></g><g stroke="#b4b4b4" stroke-width="1"><rect x="1065.300" y="96" width="6.500" height="6"/><rect x="1069.300" y="100" width="7" height="6.500"/><rect x="1064.300" y="95" width="2" height="2" fill="#ddd"/><rect x="1070.800" y="95" width="2" height="2" fill="#ddd"/><rect x="1064.300" y="101" width="2" height="2" fill="#ddd"/><rect x="1075.300" y="99" width="2" height="2" fill="#ddd"/><rect x="1075.300" y="105.500" width="2" height="2" fill="#ddd"/><rect x="1068.300" y="105.500" width="2" height="2" fill="#ddd"/></g><g stroke="#b4b4b4" stroke-width="1"><rect x="1121" y="95" width="9" height="9" rx="1"/><rect x="1124" y="98" width="9" height="9" rx="1" fill="#ddd"/><path d="M1128.500,100l0.800,1.700l1.900,0.200l-1.400,1.300l0.400,1.900l-1.700,-1l-1.700,1l0.400,-1.900l-1.400,-1.300l1.900,-0.200z" stroke-width="0.800"/></g><g stroke="#b4b4b4" stroke-width="1"><path d="M1173.500,97.300h10.500M1176.800,97.300v-1.800h3.800v1.800M1174.600,97.300l0.600,9.700h7l0.600,-9.700"/><path d="M1177.300,99.800v4.800M1180,99.800v4.800" stroke-width="0.800"/></g><path d="M1020,168.2H1188" stroke="#d3d3d3" stroke-width="1"/><path d="M1020,226.7H1188" stroke="#d3d3d3" stroke-width="1"/><path d="M1020,285.2H1188" stroke="#d3d3d3" stroke-width="1"/><path d="M1020,344H1188" stroke="#d3d3d3" stroke-width="1"/><path d="M998,404.3H1188" stroke="#d3d3d3" stroke-width="1"/><path d="M1020,428.8H1188" stroke="#d3d3d3" stroke-width="1"/><path d="M1020,462.7H1188" stroke="#d3d3d3" stroke-width="1"/><path d="M1020,496.4H1188" stroke="#d3d3d3" stroke-width="1"/><path d="M1020,529.6H1188" stroke="#d3d3d3" stroke-width="1"/><path d="M1020,563.5H1188" stroke="#d3d3d3" stroke-width="1"/><path d="M998,596.7H1188" stroke="#d3d3d3" stroke-width="1"/><path d="M1022,178.9h6l-3,3.400z" fill="#222"/><path d="M1022,237.5h6l-3,3.400z" fill="#222"/><path d="M1022,296.0h6l-3,3.400z" fill="#222"/><path d="M1022,354.5h6l-3,3.400z" fill="#222"/><path d="M1005.8,415.5h6l-3,3.400z" fill="#222"/><path d="M1165.6,180.8 C1168.4,175.8 1174.4,175.8 1177.2,180.8 C1174.4,185.8 1168.4,185.8 1165.6,180.8 Z" stroke="#222" stroke-width="1.1" fill="#fff"/><circle cx="1171.4" cy="180.8" r="2.500" fill="#222"/><circle cx="1170.6" cy="179.9" r="0.700" fill="#fff"/><path d="M1165.6,239.3 C1168.4,234.3 1174.4,234.3 1177.2,239.3 C1174.4,244.3 1168.4,244.3 1165.6,239.3 Z" stroke="#222" stroke-width="1.1" fill="#fff"/><circle cx="1171.4" cy="239.3" r="2.500" fill="#222"/><circle cx="1170.6" cy="238.4" r="0.700" fill="#fff"/><path d="M1165.6,297.8 C1168.4,292.8 1174.4,292.8 1177.2,297.8 C1174.4,302.8 1168.4,302.8 1165.6,297.8 Z" stroke="#222" stroke-width="1.1" fill="#fff"/><circle cx="1171.4" cy="297.8" r="2.500" fill="#222"/><circle cx="1170.6" cy="296.9" r="0.700" fill="#fff"/><path d="M1165.6,356.3 C1168.4,351.3 1174.4,351.3 1177.2,356.3 C1174.4,361.3 1168.4,361.3 1165.6,356.3 Z" stroke="#222" stroke-width="1.1" fill="#fff"/><circle cx="1171.4" cy="356.3" r="2.500" fill="#222"/><circle cx="1170.6" cy="355.4" r="0.700" fill="#fff"/><path d="M1165.6,417.3 C1168.4,412.3 1174.4,412.3 1177.2,417.3 C1174.4,422.3 1168.4,422.3 1165.6,417.3 Z" stroke="#222" stroke-width="1.1" fill="#fff"/><circle cx="1171.4" cy="417.3" r="2.500" fill="#222"/><circle cx="1170.6" cy="416.4" r="0.700" fill="#fff"/><path d="M1165.6,444.8 C1168.4,439.8 1174.4,439.8 1177.2,444.8 C1174.4,449.8 1168.4,449.8 1165.6,444.8 Z" stroke="#222" stroke-width="1.1" fill="#fff"/><circle cx="1171.4" cy="444.8" r="2.500" fill="#222"/><circle cx="1170.6" cy="443.9" r="0.700" fill="#fff"/><path d="M1165.6,478.5 C1168.4,473.5 1174.4,473.5 1177.2,478.5 C1174.4,483.5 1168.4,483.5 1165.6,478.5 Z" stroke="#222" stroke-width="1.1" fill="#fff"/><circle cx="1171.4" cy="478.5" r="2.500" fill="#222"/><circle cx="1170.6" cy="477.6" r="0.700" fill="#fff"/><path d="M1165.6,512.2 C1168.4,507.2 1174.4,507.2 1177.2,512.2 C1174.4,517.2 1168.4,517.2 1165.6,512.2 Z" stroke="#222" stroke-width="1.1" fill="#fff"/><circle cx="1171.4" cy="512.2" r="2.500" fill="#222"/><circle cx="1170.6" cy="511.3" r="0.700" fill="#fff"/><path d="M1165.6,546.0 C1168.4,541.0 1174.4,541.0 1177.2,546.0 C1174.4,551.0 1168.4,551.0 1165.6,546.0 Z" stroke="#222" stroke-width="1.1" fill="#fff"/><circle cx="1171.4" cy="546.0" r="2.500" fill="#222"/><circle cx="1170.6" cy="545.1" r="0.700" fill="#fff"/><path d="M1165.6,579.6 C1168.4,574.6 1174.4,574.6 1177.2,579.6 C1174.4,584.6 1168.4,584.6 1165.6,579.6 Z" stroke="#222" stroke-width="1.1" fill="#fff"/><circle cx="1171.4" cy="579.6" r="2.500" fill="#222"/><circle cx="1170.6" cy="578.7" r="0.700" fill="#fff"/><path d="M1048.300,138.300 C1050.500,143 1054,149 1054,154.500 C1054,158 1052.500,160 1050.500,160 C1049,160 1048,159.200 1047,158.500 C1046,159.300 1044.500,160 1043.500,159.800 C1041,159.500 1040.200,157 1040.500,154 C1041,148 1046,143 1048.300,138.300 Z" fill="#a0662a"/><path d="M1042,198 C1043,196.500 1045,196.500 1046,198.500 C1048,202 1051,206 1052.300,209 C1053.200,211.500 1053.200,213.500 1052,215.500 C1051,217.500 1049.500,218.800 1048,218.700 C1046.500,218.600 1045.800,217 1045.200,215.500 C1044.500,213.500 1043.300,212.500 1043.300,210.500 C1043.300,208 1044,206.500 1043.500,204.500 C1043,202.500 1041.500,200 1042,198 Z" fill="#a0662a"/><path d="M1052,255.500 C1053.200,255.500 1053.500,256.500 1053,257.500 C1052,259.500 1051.700,261.500 1051.700,264 C1051.700,267 1051.800,269.500 1051,271.800 C1050,274.500 1047.500,277 1045.500,277.500 C1044.300,277.700 1044.200,276 1044,274.500 C1043.700,272.500 1041.300,271.500 1041.200,269.500 C1041.200,267.500 1043.500,265.500 1045,263.500 C1047,260.800 1049.500,257 1052,255.500 Z" fill="#a0662a"/><path d="M1038.7,332.8 c-3,-1.500 -3,-4 -1.500,-6.500 c1.500,-2.800 3,-6 6,-8 c3,-1.500 8,-1.500 11,0 c3,2 4.500,5.200 6,8 c1.500,2.500 1.500,5 -1.500,6.500 c-2,-0.800 -3.200,-2.500 -4.500,-4.500 c-1.200,1.800 -2.500,3 -4.800,3 c-2.300,0 -3.600,-1.200 -4.800,-3 c-1.300,2 -3,3.700 -5.900,4.500 Z" fill="#c68645"/><path d="M1039,391.3 c-3,-1.500 -3,-4 -1.500,-6.500 c1.500,-2.800 3,-6 6,-8 c3,-1.500 8,-1.500 11,0 c3,2 4.500,5.200 6,8 c1.500,2.500 1.500,5 -1.500,6.500 c-2,-0.800 -3.200,-2.500 -4.500,-4.500 c-1.200,1.800 -2.500,3 -4.800,3 c-2.300,0 -3.600,-1.200 -4.800,-3 c-1.300,2 -3,3.700 -5.900,4.500 Z" fill="#a9651f"/><path d="M1028,433.700 h8 c3,1 4.800,4.500 4.800,8 v6.500 c0,3.500 -1.800,7 -4.800,8 h-8 c-3.200,-1 -5.300,-4.500 -5.300,-8 v-6.500 c0,-3.500 2.100,-7 5.300,-8 Z M1032,443.400 a3,1.800 0 1 0 0.010,0 Z" fill="#a06d35" fill-rule="evenodd"/><rect x="1022.900" y="467.300" width="17.900" height="20.200" rx="3.200" fill="#a46e33"/><path d="M1031.7,501 c2.200,0 3.200,1.500 3.300,3.500 c0.200,3.500 1,7 2,10 c1.200,3 1.400,6 -0.700,8 c-1.500,1.300 -3,1.500 -4.600,1.500 c-1.600,0 -3.100,-0.200 -4.600,-1.500 c-2.100,-2 -1.900,-5 -0.700,-8 c1,-3 1.800,-6.500 2,-10 c0.100,-2 1.100,-3.500 3.300,-3.500 Z M1031.5,510.7 a2.500,3.300 0 1 0 0.010,0 Z" fill="#9f692d" fill-rule="evenodd"/><path d="M1031.7,568.5 c2.200,0 3.200,1.500 3.300,3.500 c0.200,3.500 1,7 2,10 c1.200,3 1.400,6 -0.700,8 c-1.500,1.300 -3,1.500 -4.600,1.500 c-1.600,0 -3.100,-0.200 -4.600,-1.500 c-2.100,-2 -1.900,-5 -0.700,-8 c1,-3 1.800,-6.500 2,-10 c0.100,-2 1.100,-3.500 3.300,-3.500 Z M1031.5,578.2 a2.500,3.300 0 1 0 0.010,0 Z" fill="#9f692d" fill-rule="evenodd"/><path d="M1031.600,535.300 c2,0 3,1.300 3.200,3 c0.300,3 1.500,5.500 1.700,8.500 c0.100,2.500 -1.200,4.200 -1.700,6.200 c-0.300,1.500 0,3 -0.200,4.600 h-6 c-0.200,-1.600 0.100,-3.100 -0.200,-4.600 c-0.500,-2 -1.800,-3.700 -1.700,-6.200 c0.200,-3 1.400,-5.500 1.700,-8.500 c0.200,-1.700 1.200,-3 3.200,-3 Z M1031.500,544 a2.500,3.300 0 1 0 0.010,0 Z" fill="#e0a965" fill-rule="evenodd"/><rect x="1006.300" y="603.300" width="41.200" height="28.200" rx="2" fill="#fff" stroke="#9a9a9a" stroke-width="1"/><g stroke="#bdbdbd" stroke-width="1"><rect x="1010" y="641.500" width="7.500" height="7.500" rx="1"/><circle cx="1018.300" cy="650" r="3.800" fill="#dcdcdc"/><path d="M1014.500,649v-3.500h3"/></g><g stroke="#bdbdbd" stroke-width="1"><path d="M1045.800,641.500h7.500v4.200a3.900,3.900 0 1 1 -3.600,3.300h-3.900z"/></g><g stroke="#bdbdbd" stroke-width="1.1"><path d="M1093.800,646.500l-4.300,-4.300a2,2 0 0 0 -2.900,2.900l6.300,6.300a2.500,2.500 0 0 0 3.600,-3.600l-5.200,-5.200"/></g><g stroke="#bdbdbd" stroke-width="1"><path d="M1132.200,640.500v6M1130,644.500l2.200,2.200l2.200,-2.200M1128.500,645.500l-3,1.800l6.700,3.800l6.700,-3.800l-3,-1.800M1125.500,650.300l6.700,3.800l6.700,-3.800"/></g><g stroke="#bdbdbd" stroke-width="1"><rect x="1171.500" y="641.500" width="12" height="12"/><path d="M1174.500,647v-2.500h2.500M1178.500,650.500h2.500v-2.500" /></g></svg><div class="t" style="left:1034.70px;top:74.35px;font-size:10.5px;color:#444;font-weight:normal;;transform:scaleX(0.885)">Layers</div><div class="t" style="left:1126.40px;top:74.35px;font-size:10.5px;color:#444;font-weight:normal;;transform:scaleX(0.940)">Color Sync</div><div class="t" style="left:1009.30px;top:113.75px;font-size:8.5px;color:#b7b7b7;font-weight:normal;;transform:scaleX(0.948)">Group</div><div class="t" style="left:1054.50px;top:113.75px;font-size:8.5px;color:#b7b7b7;font-weight:normal;;transform:scaleX(0.954)">UnGroup</div><div class="t" style="left:1110.00px;top:113.75px;font-size:8.5px;color:#b7b7b7;font-weight:normal;;transform:scaleX(0.974)">Duplicate</div><div class="t" style="left:1167.20px;top:113.75px;font-size:8.5px;color:#b7b7b7;font-weight:normal;;transform:scaleX(0.936)">Delete</div><div class="t" style="left:1067.00px;top:143.45px;font-size:9.7px;color:#444;font-weight:normal;;transform:scaleX(0.994)">Basic Cut</div><div class="t" style="left:1067.00px;top:202.35px;font-size:9.7px;color:#444;font-weight:normal;;transform:scaleX(0.994)">Basic Cut</div><div class="t" style="left:1067.00px;top:261.05px;font-size:9.7px;color:#444;font-weight:normal;;transform:scaleX(0.994)">Basic Cut</div><div class="t" style="left:1067.00px;top:319.45px;font-size:9.7px;color:#444;font-weight:normal;;transform:scaleX(0.994)">Basic Cut</div><div class="t" style="left:1067.00px;top:378.45px;font-size:9.7px;color:#444;font-weight:normal;;transform:scaleX(0.994)">Basic Cut</div><div class="t" style="left:1035.50px;top:172.95px;font-size:13.3px;color:#222;font-weight:normal;;transform:scaleX(0.960)">Svg_dachshund_cr...</div><div class="t" style="left:1035.50px;top:231.45px;font-size:13.3px;color:#222;font-weight:normal;;transform:scaleX(0.960)">Svg_dachshund_cr...</div><div class="t" style="left:1035.50px;top:289.95px;font-size:13.3px;color:#222;font-weight:normal;;transform:scaleX(0.960)">Svg_dachshund_cr...</div><div class="t" style="left:1035.50px;top:348.45px;font-size:13.3px;color:#222;font-weight:normal;;transform:scaleX(0.960)">Svg_dachshund_cr...</div><div class="t" style="left:1020.00px;top:409.75px;font-size:13.3px;color:#222;font-weight:normal;;transform:scaleX(0.925)">Svg_myo_dog_egg_s...</div><div class="t" style="left:1051.60px;top:439.65px;font-size:9.7px;color:#444;font-weight:normal;;transform:scaleX(0.974)">Basic Cut</div><div class="t" style="left:1051.60px;top:473.35px;font-size:9.7px;color:#444;font-weight:normal;;transform:scaleX(0.974)">Basic Cut</div><div class="t" style="left:1051.60px;top:507.05px;font-size:9.7px;color:#444;font-weight:normal;;transform:scaleX(0.974)">Basic Cut</div><div class="t" style="left:1051.60px;top:540.85px;font-size:9.7px;color:#444;font-weight:normal;;transform:scaleX(0.974)">Basic Cut</div><div class="t" style="left:1051.60px;top:574.45px;font-size:9.7px;color:#444;font-weight:normal;;transform:scaleX(0.974)">Basic Cut</div><div class="t" style="left:1055.60px;top:612.75px;font-size:8.5px;color:#444;font-weight:normal;;transform:scaleX(0.923)">Blank Canvas</div><div class="t" style="left:1006.80px;top:660.35px;font-size:8.5px;color:#bababa;font-weight:normal;;transform:scaleX(0.933)">Slice</div><div class="t" style="left:1042.60px;top:660.35px;font-size:8.5px;color:#bababa;font-weight:normal;;transform:scaleX(0.921)">Weld</div><div class="t" style="left:1078.80px;top:660.35px;font-size:8.5px;color:#bababa;font-weight:normal;;transform:scaleX(0.958)">Attach</div><div class="t" style="left:1120.00px;top:660.35px;font-size:8.5px;color:#bababa;font-weight:normal;;transform:scaleX(0.942)">Flatten</div><div class="t" style="left:1162.60px;top:660.35px;font-size:8.5px;color:#bababa;font-weight:normal;;transform:scaleX(0.972)">Contour</div>
<div class="abs" style="left:10.800px;top:582.200px;width:100.200px;height:77.300px;border-radius:50%;background:#c0462c"></div><div class="t" style="left:30.50px;top:592.20px;font-size:32px;color:#fff;font-weight:bold;font-family:'Liberation Serif',serif;font-style:italic;font-weight:bold;transform:scaleX(0.609)">C</div><div class="t" style="left:43.80px;top:597.20px;font-size:26px;color:#fff;font-weight:bold;font-family:'Liberation Serif',serif;font-style:italic;font-weight:bold;transform:scaleX(0.838)">raft</div><div class="t" style="left:80.70px;top:608.20px;font-size:6.8px;color:#fff;font-weight:bold;font-family:'Liberation Serif',serif;transform:scaleX(1.090)">WITH</div><div class="t" style="left:38.50px;top:617.20px;font-size:32px;color:#fff;font-weight:bold;font-family:'Liberation Serif',serif;font-style:italic;font-weight:bold;transform:scaleX(0.618)">S</div><div class="t" style="left:49.30px;top:625.05px;font-size:22.5px;color:#fff;font-weight:bold;font-family:'Liberation Serif',serif;font-style:italic;font-weight:bold;transform:scaleX(0.964)">arah</div><svg class="abs" style="left:10px;top:582px" width="102" height="78" viewBox="10 582 102 78" fill="none" stroke="#fff" stroke-linecap="round" stroke-width="1.05"><path d="M82,618.300 C86,615.600 92,619.600 101.800,616.300" stroke-width="1.400"/><path d="M35,599.500 C30,595.500 22.500,598.500 22.800,604 C23,608 28,608 27.800,604.500"/><path d="M42,641.500 C36,648.500 28.500,645 29.500,638.500 C30.500,632.500 37.500,630.500 40,634"/><path d="M39,644 C40,648 36,649.500 35.500,646.500"/><path d="M58,626 C61,622.500 66,623.500 66,627.500 C66,631 70.500,631 73,627.500 C76,623.500 82,622 86,623.500"/><path d="M80.500,630 C84,623 95,619.500 97.500,623.500 C99.500,627.500 94,631.500 91.500,628.800"/></svg>
<svg class="abs" style="left:1022.800px;top:473.200px" width="18.400" height="25.300" viewBox="0 0 16 22"><path d="M2,2 L2,17.500 L5.800,14 L8.600,20 L11,19 L8.300,13 L13.500,13 Z" fill="#000" stroke="#fff" stroke-width="1.1" stroke-linejoin="round"/></svg>
</body></html>
